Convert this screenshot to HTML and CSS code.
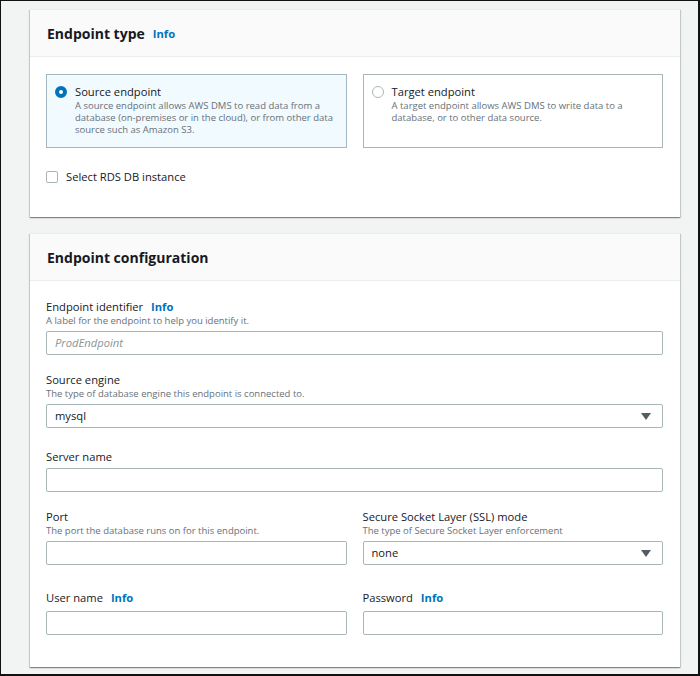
FILE: index.html
```html
<!DOCTYPE html>
<html lang="en">
<head>
  <meta charset="UTF-8" />
  <title>Create endpoint</title>
  <link rel="stylesheet" href="styles.css">
</head>
<body>
  <div class="frame">

    <div class="panel">
      <div class="panel-header">
        <h2>Endpoint type</h2>
        <a class="info" href="#">Info</a>
      </div>
      <div class="panel-body type-body">
        <div class="tiles">
          <label class="tile selected">
            <span class="radio on"></span>
            <span class="tile-text">
              <span class="tile-title">Source endpoint</span>
              <span class="tile-desc">A source endpoint allows AWS DMS to read data from a database (on-premises or in the cloud), or from other data source such as Amazon S3.</span>
            </span>
          </label>
          <label class="tile">
            <span class="radio"></span>
            <span class="tile-text">
              <span class="tile-title">Target endpoint</span>
              <span class="tile-desc">A target endpoint allows AWS DMS to write data to a database, or to other data source.</span>
            </span>
          </label>
        </div>
        <label class="check-row">
          <span class="checkbox"></span>
          Select RDS DB instance
        </label>
      </div>
    </div>

    <div class="panel">
      <div class="panel-header">
        <h2>Endpoint configuration</h2>
      </div>
      <div class="panel-body config-body">

        <div class="field">
          <div class="label">Endpoint identifier <a class="info" href="#">Info</a></div>
          <div class="desc">A label for the endpoint to help you identify it.</div>
          <div class="input placeholder">ProdEndpoint</div>
        </div>

        <div class="field">
          <div class="label">Source engine</div>
          <div class="desc">The type of database engine this endpoint is connected to.</div>
          <div class="input select">mysql <span class="caret"></span></div>
        </div>

        <div class="field server">
          <div class="label">Server name</div>
          <div class="input"></div>
        </div>

        <div class="row">
          <div class="field">
            <div class="label">Port</div>
            <div class="desc">The port the database runs on for this endpoint.</div>
            <div class="input"></div>
          </div>
          <div class="field">
            <div class="label">Secure Socket Layer (SSL) mode</div>
            <div class="desc">The type of Secure Socket Layer enforcement</div>
            <div class="input select">none <span class="caret"></span></div>
          </div>
        </div>

        <div class="row creds">
          <div class="field">
            <div class="label">User name <a class="info" href="#">Info</a></div>
            <div class="input"></div>
          </div>
          <div class="field">
            <div class="label">Password <a class="info" href="#">Info</a></div>
            <div class="input"></div>
          </div>
        </div>

      </div>
    </div>

  </div>
</body>
</html>
```

FILE: styles.css
```css
* { box-sizing: border-box; }

body {
  margin: 0;
  font-family: "Open Sans", "Noto Sans", sans-serif;
  color: #16191f;
}

.frame {
  width: 700px;
  height: 676px;
  background: #f2f3f3;
  border: 1px solid #111;
  border-right-width: 2px;
  border-bottom-width: 2px;
  padding: 8px 0 0 29px;
  overflow: hidden;
}

.panel {
  width: 650px;
  background: #fff;
  border-top: 1px solid #eaeded;
  box-shadow: 0 1px 1px 0 rgba(0,28,36,0.3), 1px 1px 1px 0 rgba(0,28,36,0.15), -1px 1px 1px 0 rgba(0,28,36,0.15);
  margin-bottom: 16px;
}

.panel-header {
  height: 47px;
  background: #fafafa;
  border-bottom: 1px solid #eaeded;
  padding: 0 17px;
  display: flex;
  align-items: center;
  gap: 8px;
}

.panel-header h2 {
  margin: 0;
  font-size: 14px;
  font-weight: 700;
}

.info {
  color: #0073bb;
  font-weight: 700;
  font-size: 11.2px;
  text-decoration: none;
}

.label .info {
  margin-left: 5px;
}

.panel-body {
  padding: 0 17px 0 16px;
}

.type-body {
  padding-top: 17px;
  padding-bottom: 33px;
}

.tiles {
  display: flex;
  gap: 16px;
}

.tile {
  flex: 1;
  height: 74px;
  border: 1px solid #aab7b8;
  display: flex;
  gap: 8px;
  padding: 9px 8px;
}

.tile.selected {
  background: #f1faff;
  border-color: #a5b7c2;
}

.radio {
  flex: none;
  width: 12px;
  height: 12px;
  margin-top: 2px;
  border: 1px solid #aab7b8;
  border-radius: 50%;
  background: #fff;
}

.radio.on {
  border: 4px solid #0073bb;
}

.tile-text {
  display: flex;
  flex-direction: column;
}

.tile-title {
  font-size: 11.2px;
  line-height: 16px;
}

.tile-desc {
  font-size: 9.5px;
  line-height: 12px;
  color: #687078;
}

.check-row {
  display: flex;
  align-items: center;
  gap: 8px;
  margin-top: 22px;
  font-size: 11.2px;
  line-height: 14px;
}

.checkbox {
  width: 12px;
  height: 12px;
  border: 1px solid #aab7b8;
  border-radius: 2px;
  background: #fff;
}

.config-body {
  padding-top: 18px;
  padding-bottom: 32px;
}

.field {
  margin-top: 17px;
}

.config-body > .field:first-child {
  margin-top: 0;
}

.field.server {
  margin-top: 21px;
}

.row {
  display: flex;
  gap: 16px;
  margin-top: 17px;
}

.row .field {
  flex: 1;
  margin-top: 0;
}

.row.creds {
  margin-top: 25px;
}

.row.creds .input {
  margin-top: 6px;
}

.label {
  font-size: 11.2px;
  line-height: 15px;
}

.desc {
  font-size: 9.5px;
  line-height: 14px;
  color: #687078;
}

.input {
  margin-top: 4px;
  height: 24px;
  border: 1px solid #aab7b8;
  border-radius: 2px;
  background: #fff;
  font-size: 11.2px;
  line-height: 22px;
  padding: 0 8px;
}

.desc + .input {
  margin-top: 3px;
}

.placeholder {
  color: #879596;
  font-style: italic;
}

.select {
  display: flex;
  justify-content: space-between;
  align-items: center;
}

.caret {
  width: 0;
  height: 0;
  border-left: 5px solid transparent;
  border-right: 5px solid transparent;
  border-top: 7px solid #545b64;
  margin-right: 3px;
}
```
